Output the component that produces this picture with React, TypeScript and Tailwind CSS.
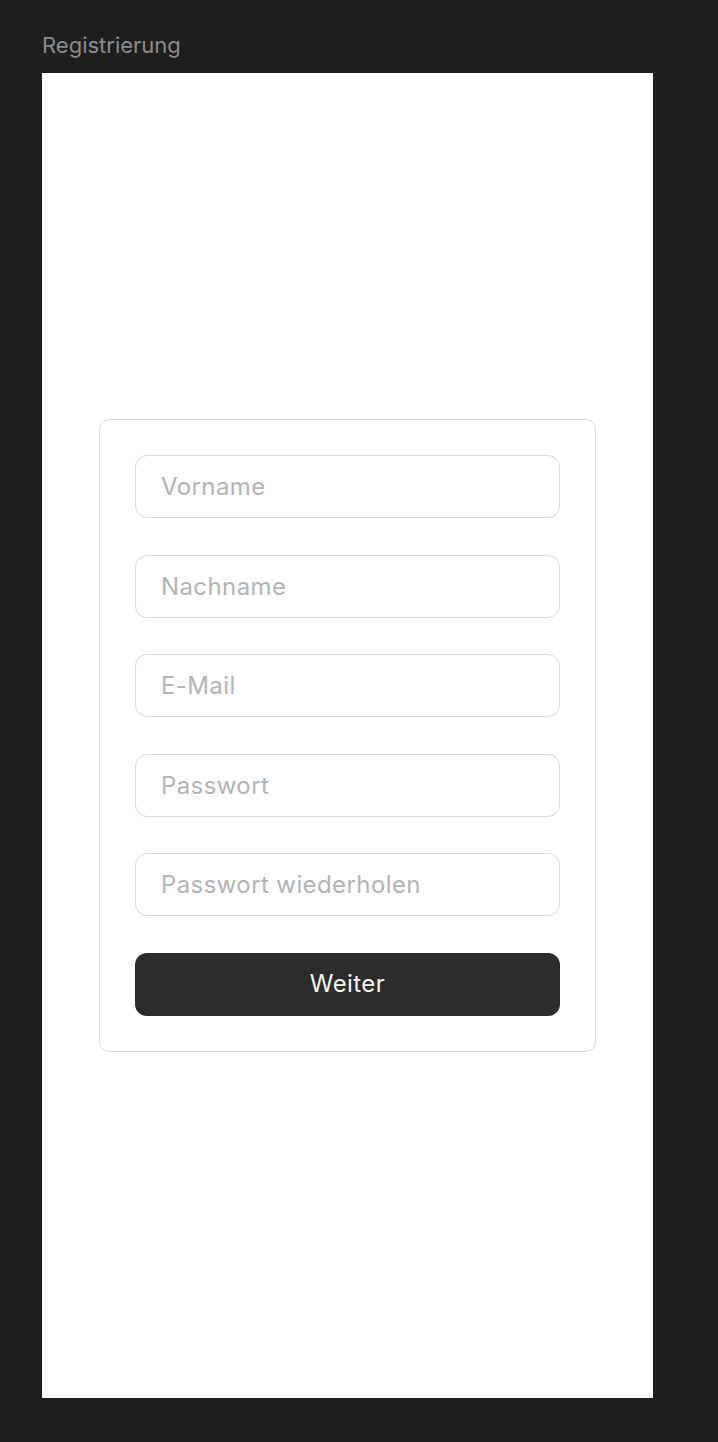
import React from 'react';

const fields = ['Vorname', 'Nachname', 'E-Mail', 'Passwort', 'Passwort wiederholen'];

const App = () => {
  return (
    <div
      className="min-h-[1442px] w-[718px] bg-[#1e1e1e] pl-[42px] pt-[31px]"
      style={{ fontFamily: 'Inter, "Noto Sans", sans-serif' }}
    >
      <p className="h-[42px] text-[22px] leading-[28px] text-[#8c8c8c]">Registrierung</p>
      <div className="flex h-[1325px] w-[611px] items-center justify-center bg-white">
        <form className="flex w-[497px] flex-col gap-[36.6px] rounded-[10px] border border-[#d9d9d9] px-[35px] py-[35.5px]">
          {fields.map((f) => (
            <input
              key={f}
              type={f.startsWith('Passwort') ? 'password' : 'text'}
              placeholder={f}
              className="h-[63px] w-full rounded-[12px] border border-[#d9d9d9] bg-white px-[25px] text-[24px] tracking-[0.4px] text-[#1e1e1e] outline-none placeholder:text-[#b3b3b3]"
            />
          ))}
          <button
            type="button"
            className="h-[63px] w-full rounded-[12px] bg-[#2c2c2c] text-[24px] tracking-[0.4px] text-[#f5f5f5]"
          >
            Weiter
          </button>
        </form>
      </div>
    </div>
  );
};

export default App;
